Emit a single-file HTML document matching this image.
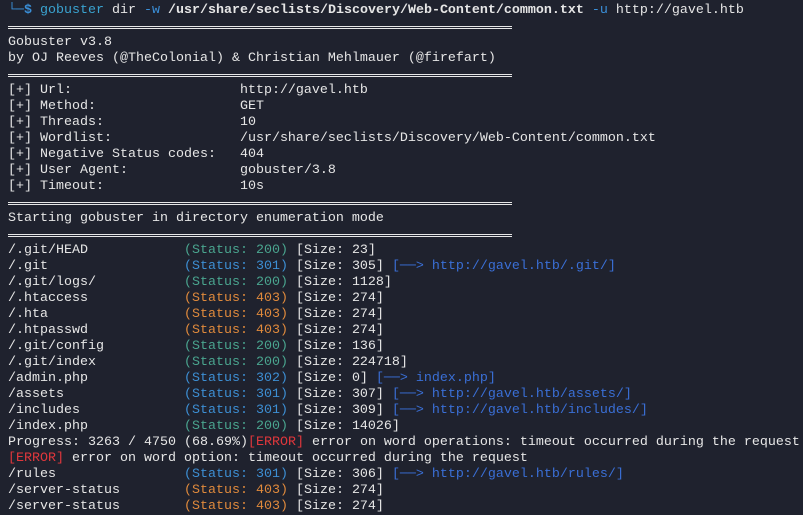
<!DOCTYPE html><html><head><style>
html,body{margin:0;background:#1f222e;width:803px;height:501px;overflow:hidden}
pre{margin:0;position:absolute;left:8px;top:3px;font-family:"Liberation Mono",monospace;font-size:13.33px;line-height:16px;color:#e6e6e6;white-space:pre}
.r{height:16px;position:relative}
.r:after{content:"";position:absolute;left:0;width:504px;top:7px;height:1px;border-top:1px solid #e6e6e6;border-bottom:1px solid #e6e6e6}
.g{color:#4aa58f}.b{color:#3d8fd4}.o{color:#e08a3c}.l{color:#3a6fd6}.e{color:#e0373c}
.p{color:#3a8fd8}.c{color:#3aa3d0}
</style></head><body><pre><span class="p">└─<b>$</b></span> <span class="c">gobuster</span> dir <span class="p">-w</span> <b>/usr/share/seclists/Discovery/Web-Content/common.txt</b> <span class="p">-u</span> http://gavel.htb
<div class="r"></div>Gobuster v3.8
by OJ Reeves (@TheColonial) &amp; Christian Mehlmauer (@firefart)
<div class="r"></div>[+] Url:                     http://gavel.htb
[+] Method:                  GET
[+] Threads:                 10
[+] Wordlist:                /usr/share/seclists/Discovery/Web-Content/common.txt
[+] Negative Status codes:   404
[+] User Agent:              gobuster/3.8
[+] Timeout:                 10s
<div class="r"></div>Starting gobuster in directory enumeration mode
<div class="r"></div>/.git/HEAD            <span class="g">(Status: 200)</span> [Size: 23]
/.git                 <span class="b">(Status: 301)</span> [Size: 305] <span class="l">[──&gt; http://gavel.htb/.git/]</span>
/.git/logs/           <span class="g">(Status: 200)</span> [Size: 1128]
/.htaccess            <span class="o">(Status: 403)</span> [Size: 274]
/.hta                 <span class="o">(Status: 403)</span> [Size: 274]
/.htpasswd            <span class="o">(Status: 403)</span> [Size: 274]
/.git/config          <span class="g">(Status: 200)</span> [Size: 136]
/.git/index           <span class="g">(Status: 200)</span> [Size: 224718]
/admin.php            <span class="b">(Status: 302)</span> [Size: 0] <span class="l">[──&gt; index.php]</span>
/assets               <span class="b">(Status: 301)</span> [Size: 307] <span class="l">[──&gt; http://gavel.htb/assets/]</span>
/includes             <span class="b">(Status: 301)</span> [Size: 309] <span class="l">[──&gt; http://gavel.htb/includes/]</span>
/index.php            <span class="g">(Status: 200)</span> [Size: 14026]
Progress: 3263 / 4750 (68.69%)<span class="e">[ERROR]</span> error on word operations: timeout occurred during the request
<span class="e">[ERROR]</span> error on word option: timeout occurred during the request
/rules                <span class="b">(Status: 301)</span> [Size: 306] <span class="l">[──&gt; http://gavel.htb/rules/]</span>
/server-status        <span class="o">(Status: 403)</span> [Size: 274]
/server-status        <span class="o">(Status: 403)</span> [Size: 274]
</pre></body></html>
